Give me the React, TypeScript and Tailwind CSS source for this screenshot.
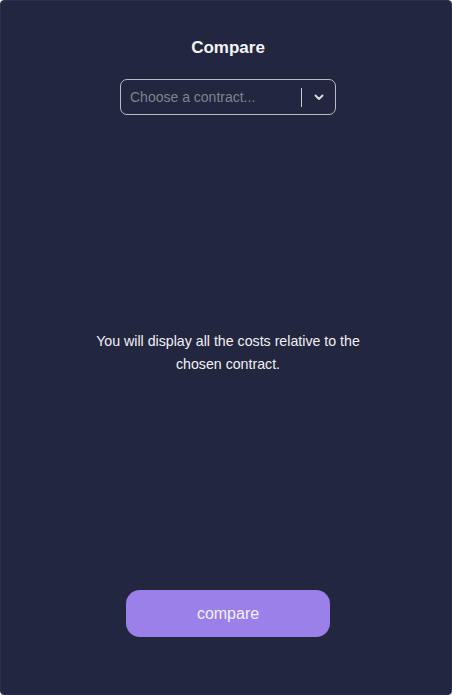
import React from "react";

export default function App() {
  return (
    <div
      className="w-[452px] h-[695px] bg-[#22263f] border border-[#2c3049] rounded-[4px] flex flex-col items-center pl-[4px] text-white"
      style={{ fontFamily: "'Liberation Sans', Arial, sans-serif" }}
    >
      <h1 className="mt-[37px] text-[17px] leading-[20px] font-bold text-[#f4f4f8]">Compare</h1>
      <div className="mt-[21px] w-[216px] h-[36px] border border-[#b9bbc6] rounded-[7px] flex items-center">
        <span className="flex-1 pl-[9px] text-[14px] text-[#80838f]">Choose a contract...</span>
        <div className="w-px h-[19px] bg-[#c9cad2]" />
        <div className="w-[33px] flex items-center justify-center">
          <svg width="12" height="12" viewBox="0 0 12 12" fill="none">
            <path d="M2.5 4.5L6 8L9.5 4.5" stroke="#d8d9e0" strokeWidth="2" strokeLinecap="round" strokeLinejoin="round" />
          </svg>
        </div>
      </div>
      <div className="flex-1 flex items-center justify-center">
        <p className="w-[285px] text-center text-[14.2px] leading-[23px] text-[#f1f1f5]">
          You will display all the costs relative to the chosen contract.
        </p>
      </div>
      <button className="mb-[57px] w-[204px] h-[47px] rounded-[14px] bg-[#9b80e9] text-[16px] text-[#f2eeff]">
        compare
      </button>
    </div>
  );
}
